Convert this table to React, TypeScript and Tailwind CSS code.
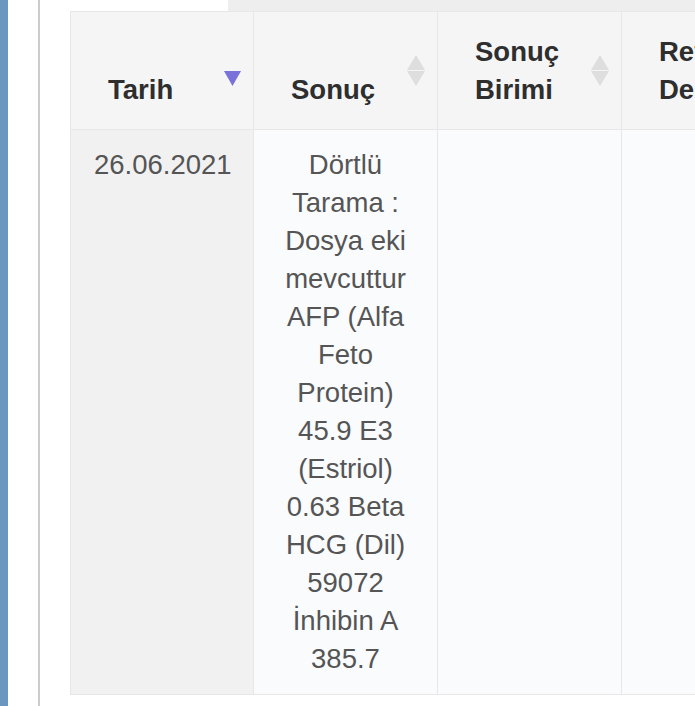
import React from "react"

type Column = {
  title: string
  sort: "desc" | "both"
}

const columns: Array<Column> = [
  { title: "Tarih", sort: "desc" },
  { title: "Sonuç", sort: "both" },
  { title: "Sonuç Birimi", sort: "both" },
  { title: "Referans Değeri", sort: "both" },
]

const resultText =
  "Dörtlü Tarama : Dosya eki mevcuttur AFP (Alfa Feto Protein) 45.9 E3 (Estriol) 0.63 Beta HCG (Dil) 59072 İnhibin A 385.7"

const SortIcon = ({ sort }: { sort: Column["sort"] }) => {
  if (sort === "desc")
    return (
      <svg
        className="absolute right-[12px] top-[59px]"
        width="17"
        height="15"
        viewBox="0 0 17 15"
      >
        <polygon points="0,0 17,0 8.5,15" fill="#7a72d8" />
      </svg>
    )
  return (
    <svg
      className="absolute right-[12px] top-[43px]"
      width="18"
      height="31"
      viewBox="0 0 18 31"
    >
      <polygon points="9,0 18,15 0,15" fill="#dedede" />
      <polygon points="0,16 18,16 9,31" fill="#dedede" />
    </svg>
  )
}

const App = () => {
  return (
    <div className="flex h-[706px] w-[695px] overflow-hidden bg-white font-['Liberation_Sans',Arial,sans-serif]">
      <div className="w-2 shrink-0 bg-[#6a96c0]"></div>
      <div className="w-[30px] shrink-0"></div>
      <div className="w-0.5 shrink-0 bg-[#cbcbcb]"></div>

      <div className="min-w-0 flex-1">
        <div className="flex h-[11px]">
          <div className="w-[188px] bg-white"></div>
          <div className="flex-1 bg-[#eeeeee]"></div>
        </div>

        <div className="pl-[30px]">
          <table className="w-[737px] table-fixed border-collapse text-[27.5px] leading-[38px]">
            <colgroup>
              <col className="w-[183px]" />
              <col className="w-[184px]" />
              <col className="w-[184px]" />
              <col className="w-[186px]" />
            </colgroup>
            <thead>
              <tr>
                {columns.map((col) => (
                  <th
                    key={col.title}
                    className="relative border border-[#e7e7e7] bg-[#f5f5f5] pt-[21px] pb-[20px] pl-[37px] pr-[37px] text-left align-bottom font-bold text-[#2e2e2e]"
                  >
                    {col.title}
                    <SortIcon sort={col.sort} />
                  </th>
                ))}
              </tr>
            </thead>
            <tbody>
              <tr>
                <td className="border border-[#e7e7e7] bg-[#f1f1f1] px-[23px] py-[16px] text-center align-top text-[#555555]">
                  26.06.2021
                </td>
                <td className="border border-[#e7e7e7] bg-[#fafbfd] px-[23px] py-[16px] text-center align-top text-[#555555]">
                  {resultText}
                </td>
                <td className="border border-[#e7e7e7] bg-[#fafbfd] px-[23px] py-[16px] text-center align-top text-[#555555]"></td>
                <td className="border border-[#e7e7e7] bg-[#fafbfd] px-[23px] py-[16px] text-center align-top text-[#555555]"></td>
              </tr>
            </tbody>
          </table>
        </div>
      </div>
    </div>
  )
}

export default App
